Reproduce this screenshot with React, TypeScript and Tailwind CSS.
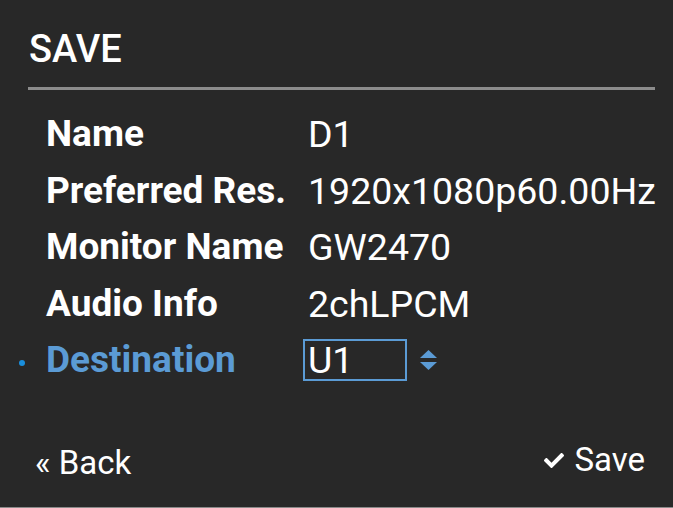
import React from 'react';

const rows = [
  { label: 'Name', value: 'D1' },
  { label: 'Preferred Res.', value: '1920x1080p60.00Hz' },
  { label: 'Monitor Name', value: 'GW2470' },
  { label: 'Audio Info', value: '2chLPCM' },
];

const SortArrows = () => (
  <svg width="17" height="20" viewBox="0 0 17 20" className="shrink-0">
    <path d="M8.5 0 L17 8 L0 8 Z" fill="#5b9bd5" />
    <path d="M0 12 L17 12 L8.5 20 Z" fill="#5b9bd5" />
  </svg>
);

const CheckIcon = () => (
  <svg width="20" height="15" viewBox="0 72 512 368" className="shrink-0">
    <path
      fill="#ffffff"
      d="M173.898 439.404l-166.4-166.4c-9.997-9.997-9.997-26.206 0-36.204l36.203-36.204c9.997-9.998 26.207-9.998 36.204 0L192 312.69 432.095 72.596c9.997-9.997 26.207-9.997 36.204 0l36.203 36.204c9.997 9.997 9.997 26.206 0 36.204l-294.4 294.401c-9.998 9.997-26.207 9.997-36.204-.001z"
    />
  </svg>
);

export default function App() {
  return (
    <div className="w-[673px] h-[508px] bg-[#282828] border-b border-[#8a8a8a] flex flex-col font-['Roboto',sans-serif] text-white overflow-hidden">
      {/* header */}
      <div className="pl-[28px] pr-[18px] pt-[27px]">
        <h1 className="text-[38px] leading-[44px] font-medium pl-[1px]">SAVE</h1>
        <div className="h-[3px] bg-[#8c8c8c] mt-[16px]" />
      </div>

      {/* info rows */}
      <div className="mt-[16px] pl-[46px] grid grid-cols-[262px_1fr] text-[37.5px] leading-[56.5px]">
        {rows.map((r) => (
          <React.Fragment key={r.label}>
            <div className="font-bold text-[37px] whitespace-nowrap">{r.label}</div>
            <div className="whitespace-nowrap">{r.value}</div>
          </React.Fragment>
        ))}
        <div className="relative font-bold text-[37px] text-[#5b9bd5] whitespace-nowrap">
          <span className="absolute left-[-27px] top-[28px] w-[6px] h-[6px] rounded-full bg-[#1a8fdd]" />
          Destination
        </div>
        <div className="flex items-center gap-[13px]">
          <div className="ml-[-5px] w-[104px] h-[42px] border-2 border-[#5b9bd5] pl-[3px] leading-[38px]">U1</div>
          <SortArrows />
        </div>
      </div>

      {/* footer */}
      <div className="mt-auto flex justify-between items-end pr-[28px] pl-[35px] pb-[24px] text-[33px] leading-[40px]">
        <div className="whitespace-nowrap">« Back</div>
        <div className="flex items-center gap-[10px] mb-[3px]">
          <CheckIcon />
          <span>Save</span>
        </div>
      </div>
    </div>
  );
}
